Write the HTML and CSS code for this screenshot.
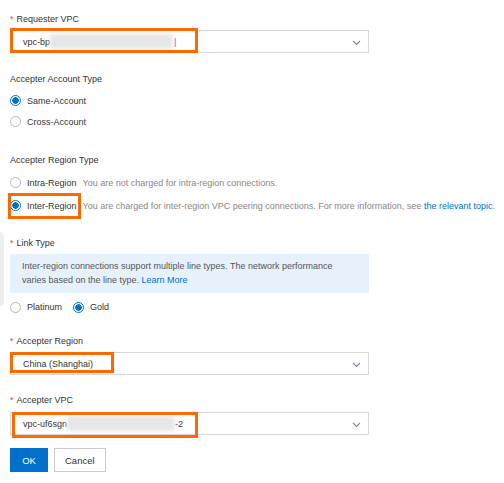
FILE: index.html
```html
<!DOCTYPE html>
<html lang="en">

<head>
    <meta charset="UTF-8">
    <title>Create Peering Connection</title>
    <link rel="stylesheet" href="styles.css">
</head>

<body>
    <div class="side-tab"></div>
    <form class="form">
        <div class="field">
            <div class="label"><span class="req">*</span>Requester VPC</div>
            <div class="select">
                <span class="value">vpc-bp</span><span class="masked"></span><span class="tail">|</span>
                <svg class="arrow" width="9" height="6" viewBox="0 0 9 6"><path d="M1 1l3.5 3.5L8 1" fill="none" stroke="#7d8aa0" stroke-width="1.1"/></svg>
                <div class="mark mark-requester"></div>
            </div>
        </div>

        <div class="field spaced">
            <div class="label">Accepter Account Type</div>
            <div class="radio-row"><span class="radio checked"></span><span class="opt">Same-Account</span></div>
            <div class="radio-row"><span class="radio"></span><span class="opt">Cross-Account</span></div>
        </div>

        <div class="field">
            <div class="label">Accepter Region Type</div>
            <div class="radio-row wide"><span class="radio"></span><span class="opt">Intra-Region</span><span class="desc">You are not charged for intra-region connections.</span></div>
            <div class="radio-row wide">
                <span class="radio checked"></span><span class="opt">Inter-Region</span><span class="desc">You are charged for inter-region VPC peering connections. For more information, see <a class="link">the relevant topic</a>.</span>
                <div class="mark mark-inter"></div>
            </div>
        </div>

        <div class="field link-type">
            <div class="label"><span class="req">*</span>Link Type</div>
            <div class="notice">Inter-region connections support multiple line types. The network performance varies based on the line type. <a class="link">Learn More</a></div>
            <div class="radio-row inline">
                <span class="radio"></span><span class="opt">Platinum</span>
                <span class="radio checked"></span><span class="opt">Gold</span>
            </div>
        </div>

        <div class="field region">
            <div class="label"><span class="req">*</span>Accepter Region</div>
            <div class="select">
                <span class="value">China (Shanghai)</span>
                <svg class="arrow" width="9" height="6" viewBox="0 0 9 6"><path d="M1 1l3.5 3.5L8 1" fill="none" stroke="#7d8aa0" stroke-width="1.1"/></svg>
                <div class="mark mark-region"></div>
            </div>
        </div>

        <div class="field">
            <div class="label vpc"><span class="req">*</span>Accepter VPC</div>
            <div class="select">
                <span class="value">vpc-uf6sgn</span><span class="masked short"></span><span class="value">-2</span>
                <svg class="arrow" width="9" height="6" viewBox="0 0 9 6"><path d="M1 1l3.5 3.5L8 1" fill="none" stroke="#7d8aa0" stroke-width="1.1"/></svg>
                <div class="mark mark-vpc"></div>
            </div>
        </div>

        <div class="actions">
            <button type="button" class="btn primary">OK</button>
            <button type="button" class="btn">Cancel</button>
        </div>
    </form>
</body>

</html>
```

FILE: styles.css
```css
body {
    margin: 0;
    background-color: #ffffff;
    font-family: "Liberation Sans", Arial, sans-serif;
    font-size: 9px;
    color: #333333;
}

.side-tab {
    position: absolute;
    left: 0;
    top: 232px;
    width: 4px;
    height: 74px;
    background-color: #eeeeee;
    border-radius: 0 4px 4px 0;
}

.form {
    width: 359px;
    padding: 12px 0 0 10px;
}

.field {
    margin-bottom: 19px;
}

.field.spaced {
    margin-bottom: 21px;
}

.field.link-type {
    margin-bottom: 16px;
}

.field.region {
    margin-bottom: 18px;
}

.label {
    line-height: 14px;
    margin-bottom: 4px;
    color: #333333;
}

.label.vpc {
    margin-bottom: 5px;
}

.req {
    color: #f33;
    margin-right: 3px;
}

.select {
    position: relative;
    display: flex;
    align-items: center;
    height: 21px;
    padding-left: 12px;
    border: 1px solid #d7d7d7;
    color: #333333;
}

.masked {
    width: 123px;
    height: 15px;
    background-color: #e6e6e6;
    filter: blur(2px);
}

.masked.short {
    width: 108px;
}

.tail {
    color: #6b4fbf;
    margin-left: 1px;
}

.arrow {
    position: absolute;
    right: 7px;
    top: 9px;
}

.mark {
    position: absolute;
    border: 3px solid #ff6a00;
    box-sizing: border-box;
}

.mark-requester {
    left: -1px;
    top: -3px;
    width: 188px;
    height: 25px;
}

.mark-region {
    left: -1px;
    top: -1px;
    width: 104px;
    height: 21px;
}

.mark-vpc {
    left: 1px;
    top: -1px;
    width: 186px;
    height: 26px;
}

.radio-row {
    position: relative;
    display: flex;
    align-items: center;
    height: 21px;
    white-space: nowrap;
}

.radio-row:first-of-type {
    margin-top: 5px;
}

.radio-row.wide {
    height: 23px;
}

.radio {
    width: 11px;
    height: 11px;
    border: 1px solid #b8b8b8;
    border-radius: 50%;
    box-sizing: border-box;
    margin-right: 6px;
    flex-shrink: 0;
}

.radio.checked {
    border-color: #0070cc;
    background: radial-gradient(circle, #0070cc 0 3px, #ffffff 3.5px);
}

.opt {
    color: #333333;
    flex-shrink: 0;
}

.desc {
    margin-left: 6px;
    color: #888888;
    flex-shrink: 0;
}

.link {
    color: #0070cc;
}

.mark-inter {
    left: -2px;
    top: -1px;
    width: 73px;
    height: 26px;
}

.notice {
    background-color: #e6f1fc;
    padding: 6px 12px 6px 12px;
    line-height: 13.5px;
    color: #555555;
}

.radio-row.inline {
    margin-top: 3px;
    height: 22px;
}

.radio-row.inline .opt {
    margin-right: 11px;
}

.actions {
    display: flex;
    gap: 6px;
    margin-top: -6px;
}

.btn {
    height: 24px;
    padding: 0 10px;
    border: 1px solid #cccccc;
    background-color: #ffffff;
    font-family: "Liberation Sans", Arial, sans-serif;
    font-size: 9.5px;
    color: #333333;
}

.btn.primary {
    width: 38px;
    padding: 0;
    border-color: #0070cc;
    background-color: #0070cc;
    color: #ffffff;
}
```
